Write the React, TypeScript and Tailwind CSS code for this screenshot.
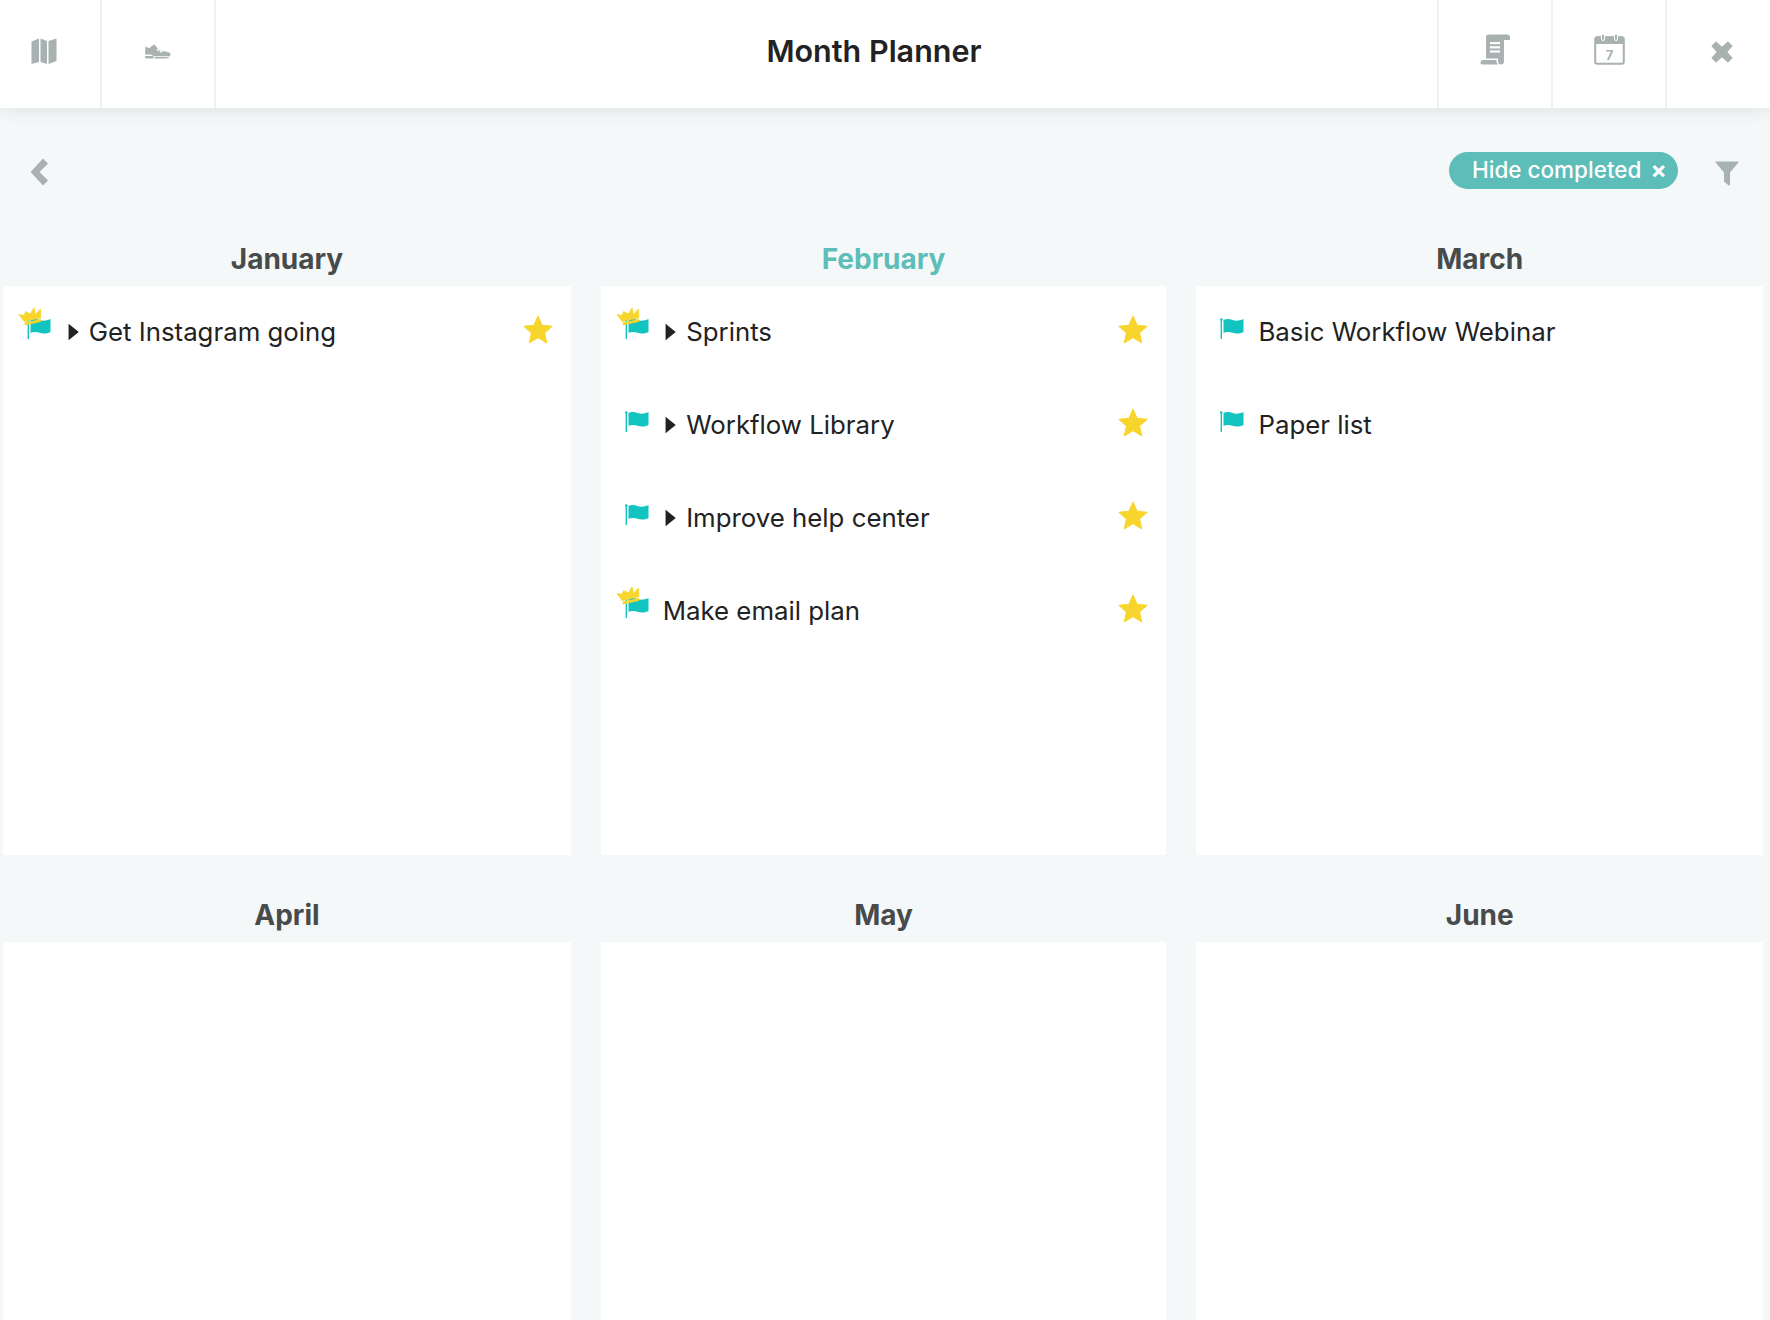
import React from "react";

const GRAY = "#a8b2b1";

function MapIcon() {
  return (
    <svg width="26" height="26" viewBox="0 0 26 26" fill={GRAY}>
      <path d="M0.5 3.5 8 0.5V24L0.5 26Z" />
      <path d="M9.5 0.5 16 3V26L9.5 24Z" />
      <path d="M17.5 3 25.5 0.5V23L17.5 26Z" />
    </svg>
  );
}

function ShoeIcon() {
  return (
    <svg width="27" height="15" viewBox="0 0 26 15" fill={GRAY}>
      <path d="M1 1.5 2.2 3.5 5 4 8 1.5 10 0.5 12 3 14.5 5.5 17 7 21 7.5 25 8.5 26 10.5 25.5 12H9L6.5 10.5H0.5Z" />
      <path d="M0.5 12H9V14.5H2Q0.5 14.5 0.5 13Z" />
      <path d="M10 12.8H25.5Q24 14.6 21 14.6H10Z" />
      <path d="M13 4.6 15 6 14 7.2 12 6Z" fill="#fff" />
      <path d="M16 6.6 18 7.6 17 8.8 15 7.8Z" fill="#fff" />
    </svg>
  );
}

function ScrollIcon() {
  return (
    <svg width="31" height="31" viewBox="0 0 31 31" fill={GRAY}>
      <path d="M6 3Q6 0.5 8.5 0.5H27Q30 0.5 30 3.5V6H24V27Q24 30.5 21 30.5 18 30.5 18 27V24.5H6Z" />
      <path d="M0.5 29Q0.5 26 3 26H16.5V27.5Q16.5 29 18 30.5H3Q0.5 30.5 0.5 29Z" />
      <rect x="10" y="8" width="10" height="2.2" fill="#fff" />
      <rect x="10" y="12.2" width="10" height="2.2" fill="#fff" />
      <rect x="10" y="16.4" width="10" height="2.2" fill="#fff" />
    </svg>
  );
}

function CalendarIcon() {
  return (
    <svg width="31" height="31" viewBox="0 0 31 31">
      <rect x="1.2" y="3.2" width="28.6" height="26.6" rx="2" fill="none" stroke={GRAY} strokeWidth="2" />
      <path d="M1 4Q1 2.5 3 2.5H28Q30 2.5 30 4V10H1Z" fill={GRAY} />
      <rect x="7.5" y="0" width="3" height="6.5" rx="1.5" fill={GRAY} stroke="#fff" strokeWidth="1" />
      <rect x="20.5" y="0" width="3" height="6.5" rx="1.5" fill={GRAY} stroke="#fff" strokeWidth="1" />
      <text x="15.5" y="25.5" textAnchor="middle" fontFamily="Inter, sans-serif" fontWeight="700" fontSize="13" fill={GRAY}>7</text>
    </svg>
  );
}

function CloseIcon() {
  return (
    <svg width="22" height="22" viewBox="0 0 22 22" fill={GRAY}>
      <path d="M5 0.8 11 6.2 17 0.8 21.2 5 15.8 11 21.2 17 17 21.2 11 15.8 5 21.2 0.8 17 6.2 11 0.8 5Z" strokeLinejoin="round" stroke={GRAY} strokeWidth="1" />
    </svg>
  );
}

function FilterIcon() {
  return (
    <svg width="24" height="25" viewBox="0 0 24 25" fill={GRAY}>
      <path d="M1 0.5H23Q24 0.5 23.4 1.6L15 11.5V23.5Q15 25 13.5 24.2L10 21.5Q9 20.8 9 19.5V11.5L0.6 1.6Q0 0.5 1 0.5Z" />
    </svg>
  );
}

function Chevron() {
  return (
    <svg width="18" height="28" viewBox="0 0 18 28" fill={GRAY}>
      <path d="M13 0.5 18 5.5 9.5 14 18 22.5 13 27.5 0.5 14Z" strokeLinejoin="round" />
    </svg>
  );
}

function Flag({ crown }: { crown?: boolean }) {
  return (
    <div className="relative w-[24px] h-[21px] shrink-0 mt-[-7px]">
      <svg width="24" height="21" viewBox="0 0 24 21" className="block">
        <circle cx="1.3" cy="1.6" r="1.3" fill="#12c4bf" />
        <rect x="0.6" y="1" width="1.4" height="20" fill="#12c4bf" />
        <path d="M3.5 2C7 0.3 9.5 0.8 12 1.8 15 3 19 3.2 23.5 1V14C19.5 16 15.5 15.8 12.5 14.8 9.5 13.8 7 13.3 3.5 15Z" fill="#12c4bf" />
      </svg>
      {crown && (
        <svg width="25" height="20" viewBox="0 0 25 20" className="absolute left-[-9px] top-[-11px]">
          <path d="M6.2 14.6 1 7.6 6 8.4 7.6 4.6 12.4 7 16 0.8 17.4 7.4 22.6 2 22.8 10.8Z" fill="#f8d52c" stroke="#f8d52c" strokeWidth="0.8" strokeLinejoin="round" />
          <path d="M6.4 15.8 23 12V14.8L7 18.6Z" fill="#f8d52c" />
        </svg>
      )}
    </div>
  );
}

function Star() {
  return (
    <svg width="30" height="29" viewBox="0 0 28 27" fill="#f8d52c" className="block shrink-0 mt-[-4px]">
      <path d="M14 1 17.8 9.6 27 10.5 20.1 16.6 22.1 25.8 14 21 5.9 25.8 7.9 16.6 1 10.5 10.2 9.6Z" stroke="#f8d52c" strokeWidth="1" strokeLinejoin="round" />
    </svg>
  );
}

function Triangle() {
  return (
    <svg width="11" height="18" viewBox="0 0 10 16" fill="#222" className="block shrink-0">
      <path d="M0.5 0.5 9.8 8 0.5 15.5Z" />
    </svg>
  );
}

type Task = { label: string; crown?: boolean; caret?: boolean; star?: boolean };

const months: { name: string; active?: boolean; tasks: Task[] }[] = [
  { name: "January", tasks: [{ label: "Get Instagram going", crown: true, caret: true, star: true }] },
  {
    name: "February",
    active: true,
    tasks: [
      { label: "Sprints", crown: true, caret: true, star: true },
      { label: "Workflow Library", caret: true, star: true },
      { label: "Improve help center", caret: true, star: true },
      { label: "Make email plan", crown: true, star: true },
    ],
  },
  { name: "March", tasks: [{ label: "Basic Workflow Webinar" }, { label: "Paper list" }] },
];

function TaskRow({ task }: { task: Task }) {
  return (
    <div className="h-[93px] pb-[2px] pl-[24px] pr-[18px] flex items-center">
      <Flag crown={task.crown} />
      {task.caret && (
        <div className="ml-[16.5px] mr-[10px]">
          <Triangle />
        </div>
      )}
      <span className={`${task.caret ? "" : "ml-[14px]"} text-[25.8px] text-[#222222] leading-none`}>{task.label}</span>
      {task.star && (
        <div className="ml-auto">
          <Star />
        </div>
      )}
    </div>
  );
}

export default function App() {
  const rest = ["April", "May", "June"];
  return (
    <div className="h-[1320px] w-[1770px] overflow-hidden bg-[#f5f8f9] flex flex-col font-['Inter',sans-serif]">
      <header className="relative z-10 h-[108px] shrink-0 bg-white flex items-center shadow-[0_2px_18px_rgba(0,0,0,0.09)]">
        <div className="w-[102px] h-full flex items-center justify-center border-r-2 border-[#edf1f2] pr-[12px] pb-[6px]">
          <MapIcon />
        </div>
        <div className="w-[114px] h-full flex items-center justify-center border-r-2 border-[#edf1f2] pr-[2px] pb-[6px]">
          <ShoeIcon />
        </div>
        <h1 className="flex-1 text-center text-[30.5px] font-semibold text-[#222222] leading-none pl-[95px] pb-[6px]">Month Planner</h1>
        <div className="w-[114px] h-full flex items-center justify-center border-l-2 border-[#edf1f2] pb-[10px]">
          <ScrollIcon />
        </div>
        <div className="w-[114px] h-full flex items-center justify-center border-l-2 border-[#edf1f2] pb-[10px]">
          <CalendarIcon />
        </div>
        <div className="w-[105px] h-full flex items-center justify-center border-l-2 border-[#edf1f2] pb-[4px] pl-[7px]">
          <CloseIcon />
        </div>
      </header>

      <div className="h-[122px] shrink-0 flex items-center pl-[30px] pr-[31px] pt-[2px]">
        <div className="mt-[3px]">
          <Chevron />
        </div>
        <div className="ml-auto flex items-center">
          <div className="h-[37px] w-[229px] rounded-full bg-[#5cbdb9] flex items-center pl-[23px] text-white text-[22.5px] font-medium leading-none">
            <span>Hide completed</span>
            <span className="ml-[9px] text-[24px] font-bold leading-none">×</span>
          </div>
          <div className="ml-[37px] mt-[6px]">
            <FilterIcon />
          </div>
        </div>
      </div>

      <div className="grid grid-cols-[567.4px_565.8px_566.5px] gap-x-[30px] pl-[3.3px]">
        {months.map((m) => (
          <div key={m.name}>
            <h2 className={`h-[56px] pt-[2px] flex items-center justify-center text-[28px] font-bold ${m.active ? "text-[#5cbdb9]" : "text-[#474b4b]"}`}>{m.name}</h2>
            <div className="h-[569px] bg-white">
              {m.tasks.map((t) => (
                <TaskRow key={t.label} task={t} />
              ))}
            </div>
          </div>
        ))}
      </div>

      <div className="grid grid-cols-[567.4px_565.8px_566.5px] gap-x-[30px] pl-[3.3px] mt-[31px] flex-1">
        {rest.map((name) => (
          <div key={name} className="flex flex-col">
            <h2 className="h-[56px] pt-[2px] flex items-center justify-center text-[28px] font-bold text-[#474b4b]">{name}</h2>
            <div className="flex-1 bg-white" />
          </div>
        ))}
      </div>
    </div>
  );
}
